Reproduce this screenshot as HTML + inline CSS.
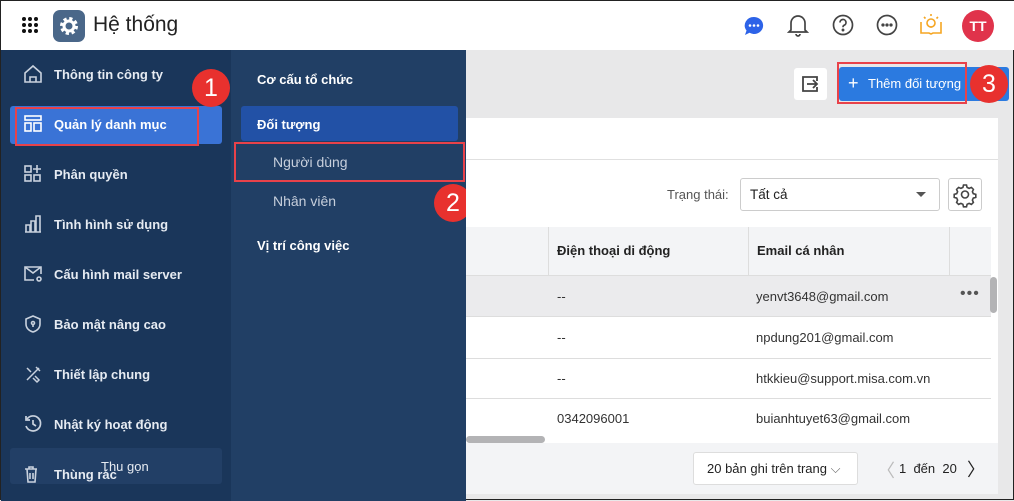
<!DOCTYPE html>
<html><head><meta charset="utf-8"><style>
*{box-sizing:border-box;margin:0;padding:0}
body{width:1014px;height:500px;overflow:hidden;font-family:"Liberation Sans",sans-serif;background:#e8e8e9;position:relative;border:1px solid #222}
.abs{position:absolute}
.hdr{left:0;top:0;width:1014px;height:49px;background:#fff}
.sb{left:0;top:49px;width:230px;height:451px;background:#1a365a}
.sb2{left:230px;top:49px;width:235px;height:451px;background:#213f65}
.it{position:absolute;left:22px;color:#e6ebf2;font-size:13px;font-weight:bold}
.it svg{position:absolute;left:0;top:-3px}
.it span{position:absolute;left:31px;top:0;white-space:nowrap}
.sub{position:absolute;color:#fff;font-size:13px;font-weight:bold;white-space:nowrap}
.red{position:absolute;border:2px solid #e8424a}
.num{position:absolute;width:38px;height:38px;border-radius:50%;background:#e8312e;color:#fff;font-size:25px;text-align:center;line-height:38px}
.card{left:465px;top:117px;width:532px;height:376px;background:#fff}
</style></head><body>
<div class="abs hdr"></div>
<svg class="abs" style="left:20px;top:15px" width="18" height="18" viewBox="0 0 18 18" fill="#111"><circle cx="3" cy="3" r="2"/><circle cx="9" cy="3" r="2"/><circle cx="15" cy="3" r="2"/><circle cx="3" cy="9" r="2"/><circle cx="9" cy="9" r="2"/><circle cx="15" cy="9" r="2"/><circle cx="3" cy="15" r="2"/><circle cx="9" cy="15" r="2"/><circle cx="15" cy="15" r="2"/></svg>
<div class="abs" style="left:52px;top:9px;width:32px;height:32px;border-radius:7px;background:#4a6789"><svg width="32" height="32" viewBox="0 0 32 32"><circle cx="16" cy="16" r="7" fill="none" stroke="#fff" stroke-width="4" stroke-dasharray="3 2.5"/><circle cx="16" cy="16" r="5" fill="none" stroke="#fff" stroke-width="3"/></svg></div>
<div class="abs" style="left:92px;top:12px;font-size:21px;color:#222">Hệ thống</div>
<svg class="abs" style="left:742px;top:14px" width="22" height="22" viewBox="0 0 22 22"><path d="M11 2a9 8.5 0 1 1-4.5 15.8L2 20l1.5-4.5A9 8.5 0 0 1 11 2z" fill="#2d63e8"/><circle cx="7" cy="10.5" r="1.3" fill="#fff"/><circle cx="11" cy="10.5" r="1.3" fill="#fff"/><circle cx="15" cy="10.5" r="1.3" fill="#fff"/></svg>
<svg class="abs" style="left:786px;top:12px" width="22" height="24" viewBox="0 0 22 24" fill="none" stroke="#444" stroke-width="1.7"><path d="M4 17V10a7 7 0 0 1 14 0v7l2 2H2z"/><path d="M9 21a2 2 0 0 0 4 0"/></svg>
<svg class="abs" style="left:831px;top:13px" width="22" height="22" viewBox="0 0 22 22" fill="none" stroke="#444" stroke-width="1.7"><circle cx="11" cy="11" r="9.5"/><path d="M8 8.5a3 3 0 1 1 4 2.8c-.8.4-1 1-1 2"/><circle cx="11" cy="16" r=".6" fill="#444"/></svg>
<svg class="abs" style="left:875px;top:13px" width="22" height="22" viewBox="0 0 22 22" fill="none" stroke="#444" stroke-width="1.7"><circle cx="11" cy="11" r="9.5"/><circle cx="7" cy="11" r=".8" fill="#444"/><circle cx="11" cy="11" r=".8" fill="#444"/><circle cx="15" cy="11" r=".8" fill="#444"/></svg>
<svg class="abs" style="left:918px;top:11px" width="24" height="24" viewBox="0 0 24 24" fill="none" stroke="#f5a623" stroke-width="1.6"><path d="M2 10v11h8l2 1 2-1h8V10"/><circle cx="12" cy="11" r="4"/><path d="M11 15h2M12 2v2M5 5l1.5 1.5M19 5l-1.5 1.5"/></svg>
<div class="abs" style="left:961px;top:9px;width:32px;height:32px;border-radius:50%;background:#e0334b;color:#fff;font-weight:bold;font-size:14px;text-align:center;line-height:32px">TT</div>

<div class="abs sb"></div>
<div class="abs sb2"></div>
<div class="abs" style="left:9px;top:105px;width:212px;height:38px;background:#3a73d6;border-radius:3px"></div>
<div class="abs" style="left:9px;top:447px;width:212px;height:36px;background:#223f66;border-radius:3px"></div>
<div class="it" style="top:66px"><svg width="20" height="20" viewBox="0 0 20 20" fill="none" stroke="#c9d2de" stroke-width="1.6"><path d="M2 9L10 2l8 7v9H2z"/><path d="M7 18v-5h6v5"/></svg><span>Thông tin công ty</span></div>
<div class="it" style="top:116px;color:#fff"><svg width="20" height="20" viewBox="0 0 20 20" fill="none" stroke="#fff" stroke-width="1.6"><rect x="2" y="2" width="16" height="4"/><rect x="2" y="9" width="6" height="8"/><rect x="11" y="9" width="7" height="8"/></svg><span>Quản lý danh mục</span></div>
<div class="it" style="top:166px"><svg width="20" height="20" viewBox="0 0 20 20" fill="none" stroke="#c9d2de" stroke-width="1.6"><rect x="2" y="2" width="6" height="6"/><rect x="2" y="11" width="6" height="6"/><rect x="11" y="11" width="6" height="6"/><path d="M14 1v8M10 5h8"/></svg><span>Phân quyền</span></div>
<div class="it" style="top:216px"><svg width="20" height="20" viewBox="0 0 20 20" fill="none" stroke="#c9d2de" stroke-width="1.6"><path d="M2 18h16M3 11h4v7H3zM8 7h4v11H8zM13 2h4v16h-4z"/></svg><span>Tình hình sử dụng</span></div>
<div class="it" style="top:266px"><svg width="20" height="20" viewBox="0 0 20 20" fill="none" stroke="#c9d2de" stroke-width="1.6"><path d="M11 16H2V3h16v7"/><path d="M2 3l8 6 8-6"/><circle cx="16" cy="15" r="2"/></svg><span>Cấu hình mail server</span></div>
<div class="it" style="top:316px"><svg width="20" height="20" viewBox="0 0 20 20" fill="none" stroke="#c9d2de" stroke-width="1.6"><path d="M10 2l7 3v5c0 4-3 7-7 8-4-1-7-4-7-8V5z"/><circle cx="10" cy="9" r="1.5"/><path d="M10 10v3"/></svg><span>Bảo mật nâng cao</span></div>
<div class="it" style="top:366px"><svg width="20" height="20" viewBox="0 0 20 20" fill="none" stroke="#c9d2de" stroke-width="1.5"><path d="M4 16L16 4M13 3l4 4M4 4l4 4M12 12l4 4-2 2-4-4"/></svg><span>Thiết lập chung</span></div>
<div class="it" style="top:416px"><svg width="20" height="20" viewBox="0 0 20 20" fill="none" stroke="#c9d2de" stroke-width="1.7"><path d="M3 12a7.5 7.5 0 1 0 1-7"/><path d="M3 2v4h4"/><path d="M10 6v4l3 2"/></svg><span>Nhật ký hoạt động</span></div>
<div class="it" style="top:466px"><svg width="20" height="20" viewBox="0 0 20 20" fill="none" stroke="#c9d2de" stroke-width="1.6"><path d="M2 5h12M6 5V3h4v2M4 5l1 13h7l1-13M7 9v6M10 9v6"/></svg><span>Thùng rác</span></div>
<div class="abs" style="left:100px;top:458px;color:#e6ebf2;font-size:13px">Thu gọn</div>
<div class="red" style="left:14px;top:106px;width:184px;height:39px"></div>
<div class="num" style="left:191px;top:68px">1</div>

<div class="sub" style="left:256px;top:71px">Cơ cấu tổ chức</div>
<div class="abs" style="left:240px;top:105px;width:217px;height:35px;background:#2251a6;border-radius:3px"></div>
<div class="sub" style="left:256px;top:116px">Đối tượng</div>
<div class="sub" style="left:272px;top:153px;color:#c7cfdc;font-weight:normal;font-size:14px">Người dùng</div>
<div class="sub" style="left:272px;top:192px;color:#c7cfdc;font-weight:normal;font-size:14px">Nhân viên</div>
<div class="sub" style="left:256px;top:237px">Vị trí công việc</div>
<div class="red" style="left:233px;top:141px;width:231px;height:40px"></div>
<div class="num" style="left:433px;top:183px">2</div>

<div class="abs" style="left:793px;top:67px;width:33px;height:32px;background:#fff;border-radius:3px"><svg width="33" height="32" viewBox="0 0 33 32" fill="none" stroke="#444" stroke-width="1.8"><path d="M14 9H9v14h14v-4M14 9h9v4M13 16h10M19 12l4 4-4 4"/></svg></div>
<div class="abs" style="left:838px;top:66px;width:170px;height:34px;background:#2b7ae0;border-radius:3px"></div>
<div class="abs" style="left:847px;top:72px;color:#fff;font-size:18px">+</div>
<div class="abs" style="left:867px;top:75px;color:#fff;font-size:13px">Thêm đối tượng</div>
<div class="red" style="left:836px;top:61px;width:130px;height:42px"></div>
<div class="num" style="left:969px;top:64px">3</div>

<div class="abs card"></div>
<div class="abs" style="left:465px;top:158px;width:532px;height:1px;background:#e0e0e0"></div>
<div class="abs" style="left:666px;top:186px;font-size:13px;color:#555">Trạng thái:</div>
<div class="abs" style="left:739px;top:177px;width:200px;height:33px;border:1px solid #ccc;border-radius:3px;font-size:13.5px;color:#222;padding:8px 9px">Tất cả<span style="position:absolute;right:13px;top:13px;border:5px solid transparent;border-top-color:#555;border-bottom:0"></span></div>
<div class="abs" style="left:947px;top:177px;width:34px;height:33px;border:1px solid #ccc;border-radius:3px"><svg width="32" height="31" viewBox="0 0 32 31" fill="none" stroke="#444" stroke-width="1.6"><circle cx="16" cy="15.5" r="3.5"/><path d="M14.5 6h3l.6 2.4 2 1 2.3-1 2 2-1 2.3.9 2 2.5.7v3l-2.5.7-.9 2 1 2.3-2 2-2.3-1-2 .9-.6 2.5h-3l-.6-2.5-2-.9-2.3 1-2-2 1-2.3-.9-2-2.5-.7v-3l2.5-.7.9-2-1-2.3 2-2 2.3 1 2-1z"/></svg></div>

<div class="abs" style="left:465px;top:226px;width:525px;height:49px;background:#f3f4f6;border-bottom:1px solid #ddd"></div>
<div class="abs" style="left:547px;top:226px;width:1px;height:48px;background:#ddd"></div>
<div class="abs" style="left:747px;top:226px;width:1px;height:48px;background:#ddd"></div>
<div class="abs" style="left:948px;top:226px;width:1px;height:48px;background:#ddd"></div>
<div class="abs" style="left:556px;top:242px;font-size:13px;font-weight:bold;color:#222">Điện thoại di động</div>
<div class="abs" style="left:756px;top:242px;font-size:13px;font-weight:bold;color:#222">Email cá nhân</div>
<div class="abs" style="left:465px;top:275px;width:525px;height:41px;background:#ebebed;border-bottom:1px solid #ddd"></div>
<div class="abs" style="left:465px;top:357px;width:525px;height:1px;background:#ddd"></div>
<div class="abs" style="left:465px;top:397px;width:525px;height:1px;background:#ddd"></div>
<div class="abs" style="left:556px;top:288px;font-size:13px;color:#333">--</div>
<div class="abs" style="left:755px;top:288px;font-size:13px;color:#333">yenvt3648@gmail.com</div>
<div class="abs" style="left:959px;top:284px;font-size:16px;color:#555;letter-spacing:1px">•••</div>
<div class="abs" style="left:556px;top:329px;font-size:13px;color:#333">--</div>
<div class="abs" style="left:755px;top:329px;font-size:13px;color:#333">npdung201@gmail.com</div>
<div class="abs" style="left:556px;top:370px;font-size:13px;color:#333">--</div>
<div class="abs" style="left:755px;top:370px;font-size:13px;color:#333">htkkieu@support.misa.com.vn</div>
<div class="abs" style="left:556px;top:410px;font-size:13px;color:#333">0342096001</div>
<div class="abs" style="left:755px;top:410px;font-size:13px;color:#333">buianhtuyet63@gmail.com</div>
<div class="abs" style="left:989px;top:276px;width:7px;height:36px;background:#b3b3b5;border-radius:4px"></div>
<div class="abs" style="left:465px;top:435px;width:79px;height:7px;background:#b3b3b5;border-radius:4px"></div>
<div class="abs" style="left:465px;top:442px;width:532px;height:51px;background:#f3f4f6"></div>
<div class="abs" style="left:692px;top:451px;width:165px;height:33px;background:#fff;border:1px solid #ddd;border-radius:3px;font-size:13px;color:#222;padding:8px 13px">20 bản ghi trên trang <span style="color:#666">⌵</span></div>
<div class="abs" style="left:876px;top:456px;font-size:18px;color:#bbb">〈</div>
<div class="abs" style="left:898px;top:460px;font-size:13px;color:#222">1&nbsp; đến&nbsp; 20</div>
<div class="abs" style="left:966px;top:455px;font-size:18px;color:#222">〉</div>
</body></html>
